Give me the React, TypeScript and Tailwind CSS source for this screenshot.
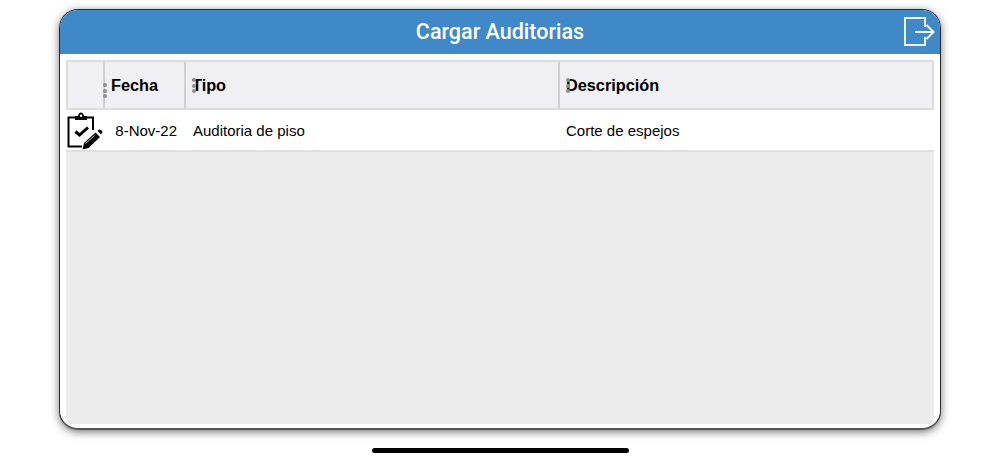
const font = { fontFamily: '"Liberation Sans", Arial, sans-serif' };

function Grip({ className }: { className: string }) {
  return (
    <div className={`absolute flex flex-col gap-[1.5px] ${className}`}>
      <span className="w-[4px] h-[4px] rounded-full bg-[#8e8e8e]" />
      <span className="w-[4px] h-[4px] rounded-full bg-[#8e8e8e]" />
      <span className="w-[4px] h-[4px] rounded-full bg-[#8e8e8e]" />
    </div>
  );
}

function AuditIcon() {
  return (
    <svg width="36" height="38" viewBox="0 0 36 38" fill="none">
      {/* clipboard */}
      <path d="M8 5.500H1.500V34.500H15" stroke="#000" strokeWidth="2" />
      <path d="M20 5.500H26V18" stroke="#000" strokeWidth="2" />
      <path d="M8 8V4H11C11.500 1.500 12.700 0.500 14 0.500C15.300 0.500 16.500 1.500 17 4H20V8Z" fill="#000" />
      <circle cx="14" cy="3.800" r="1.200" fill="#fff" />
      <path d="M8.500 19.500L12.500 23L21 15.500" stroke="#000" strokeWidth="3" />
      {/* pencil */}
      <path d="M15.500 37.500L17 31L28.500 20.500L33 25L21.500 36Z" fill="#000" />
      <path d="M30.500 18.800L32 17.800C32.700 17.300 33.300 17.300 34 18L35 19C35.600 19.700 35.600 20.300 35 21L34 22.500Z" fill="#000" />
      <path d="M18.500 31.500L27.500 23.500" stroke="#fff" strokeWidth="0.800" />
    </svg>
  );
}

function ExitIcon() {
  return (
    <svg width="32" height="29" viewBox="0 0 32 29" fill="none" stroke="#f2f6fb" strokeWidth="2">
      <path d="M21 10V1H1V28H21V20" />
      <path d="M11 15H30" />
      <path d="M22.500 8L29.500 15L22.500 22" />
    </svg>
  );
}

export default function App() {
  return (
    <div className="w-[1000px] h-[462px] bg-white flex flex-col items-center pt-[9px] overflow-hidden" style={font}>
      <div className="w-[882px] h-[421px] shrink-0 rounded-[19px] border border-[#2b2b2b] border-b-2 border-b-[#555] bg-white overflow-hidden flex flex-col shadow-[0_2px_9px_rgba(0,0,0,0.55)]">
        {/* title bar */}
        <div className="h-[44px] shrink-0 bg-[#3f89c9] relative flex items-center justify-center">
          <span className="text-white text-[21.5px] font-medium font-['Roboto'] leading-none">Cargar Auditorias</span>
          <div className="absolute right-[4px] top-[7px]">
            <ExitIcon />
          </div>
        </div>

        <div className="flex-1 flex flex-col px-[6px] pt-[6px] pb-[4px] min-h-0">
          {/* table header */}
          <div className="h-[50px] shrink-0 flex bg-[#efeff4] border-2 border-[#dcdcdc] text-[16.3px] font-bold text-black">
            <div className="w-[37px] shrink-0 border-r-2 border-[#d0d0d0]" />
            <div className="w-[81px] shrink-0 border-r-2 border-[#d0d0d0] relative flex items-center pl-[6px]">
              <Grip className="left-[-2px] top-[21px]" />
              Fecha
            </div>
            <div className="w-[374px] shrink-0 border-r-2 border-[#d0d0d0] relative flex items-center pl-[6px]">
              <Grip className="left-[6px] top-[16px]" />
              Tipo
            </div>
            <div className="flex-1 relative flex items-center pl-[6px]">
              <Grip className="left-[6px] top-[16px]" />
              Descripción
            </div>
          </div>

          {/* row */}
          <div className="h-[42px] shrink-0 flex items-center bg-white border-b-2 border-[#dfdfdf] text-[15px] text-black">
            <div className="w-[48px] shrink-0 flex items-center pl-[1px] pt-[1px]">
              <AuditIcon />
            </div>
            <div className="w-[79px] shrink-0 text-right pr-[16px] pt-[3px]">8-Nov-22</div>
            <div className="w-[373px] shrink-0 pt-[3px]">Auditoria de piso</div>
            <div className="flex-1 pt-[3px]">Corte de espejos</div>
          </div>

          {/* empty area */}
          <div className="flex-1 bg-[#ebebeb]" />
        </div>
      </div>

      {/* home indicator */}
      <div className="mt-[18px] w-[257px] h-[5px] shrink-0 rounded-full bg-black" />
    </div>
  );
}
